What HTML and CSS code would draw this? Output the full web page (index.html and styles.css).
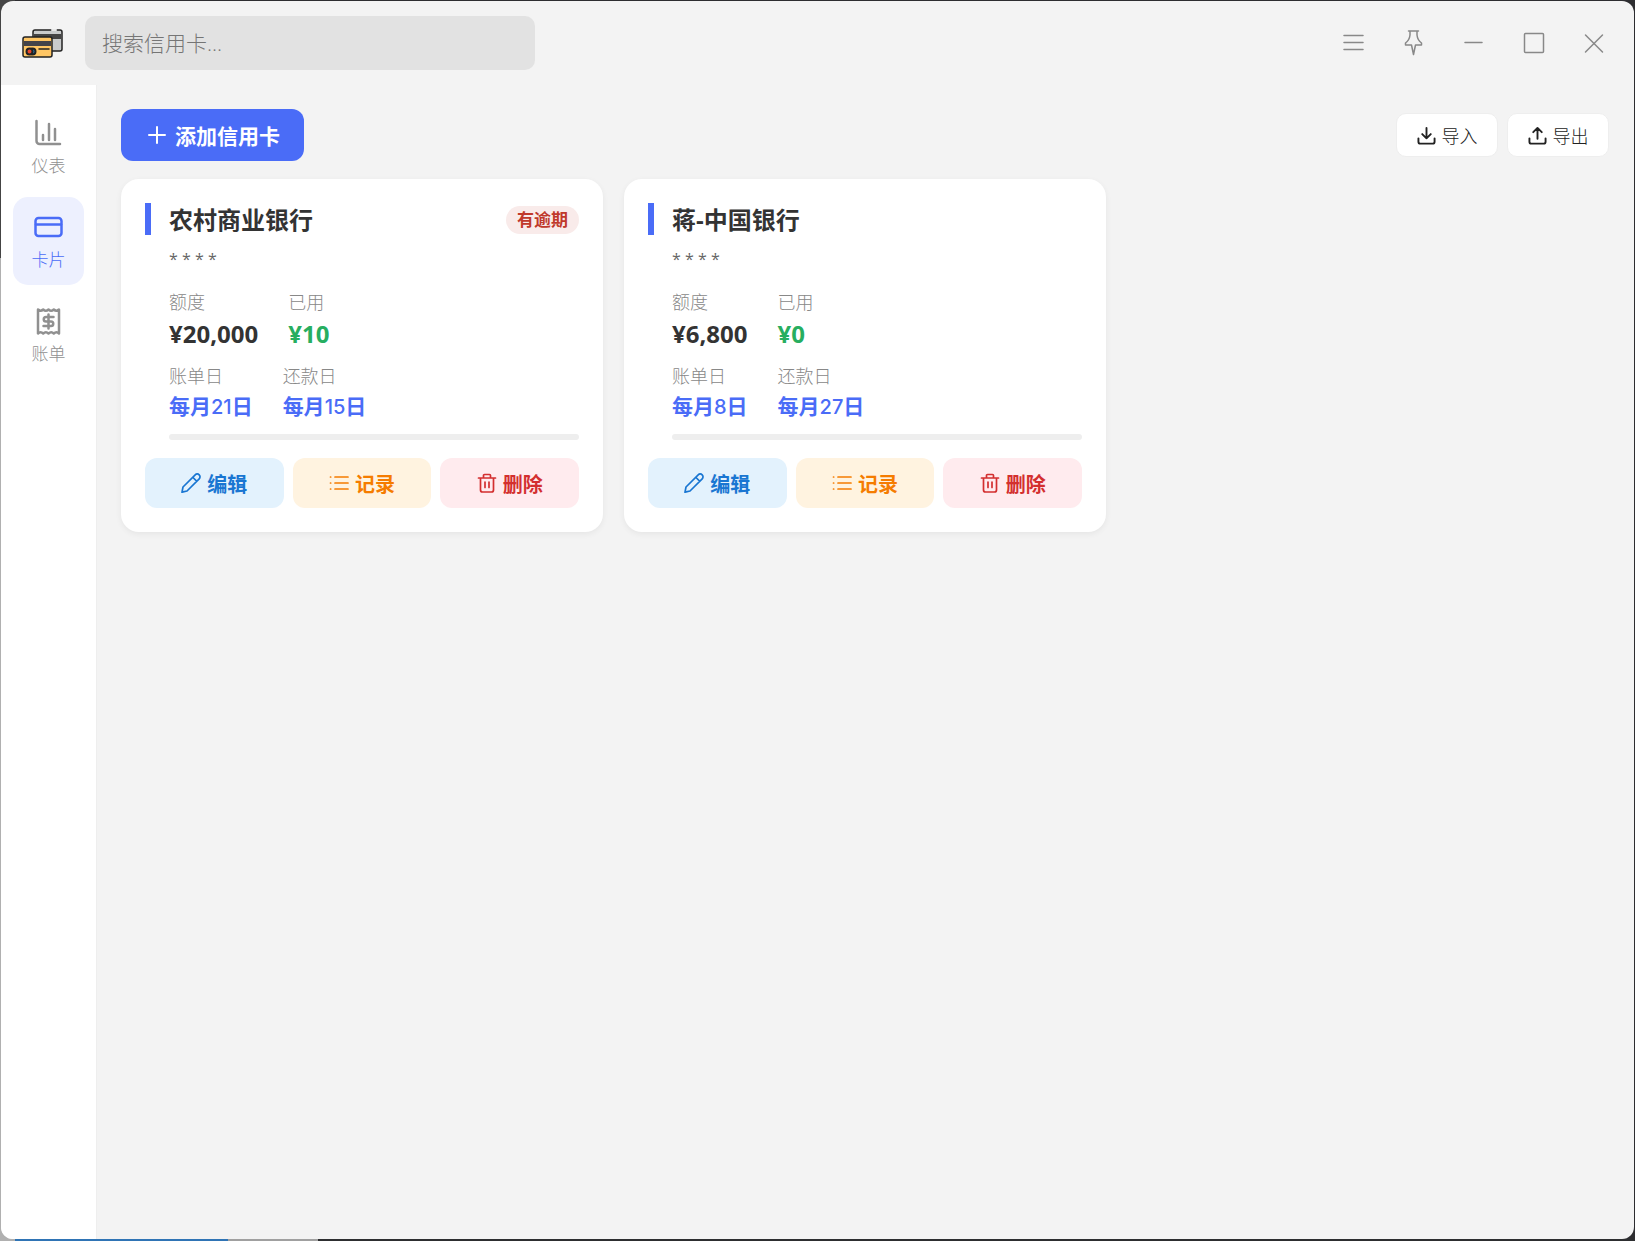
FILE: index.html
```html
<!DOCTYPE html>
<html lang="zh-CN">
<head>
    <meta charset="UTF-8">
    <meta name="viewport" content="width=device-width, initial-scale=1.0">
    <title>信用卡管理</title>
    <link rel="stylesheet" href="styles.css">
</head>
<body>
    <!-- 图标 -->
    <svg class="sprite" aria-hidden="true">
        <symbol id="i-edit" viewBox="0 0 20 20">
            <path d="M1 19.200l1-5.200L14.200 1.800a2.700 2.700 0 0 1 4 4L6 18zM12 4.500l3.600 3.600"/>
        </symbol>
        <symbol id="i-list" viewBox="0 0 20 20">
            <path d="M6 4h13M6 10h13M6 16h13M1.500 4h.2M1.500 10h.2M1.500 16h.2"/>
        </symbol>
        <symbol id="i-trash" viewBox="0 0 20 20">
            <path d="M1.500 5h17M6.500 5V2.500a1 1 0 0 1 1-1h5a1 1 0 0 1 1 1V5M3.500 5v12a2 2 0 0 0 2 2h9a2 2 0 0 0 2-2V5M8 9v5.500M12 9v5.500"/>
        </symbol>
    </svg>

    <div class="window">
        <header class="titlebar">
            <svg class="logo" viewBox="0 0 42 32">
                <rect x="11" y="3" width="29" height="21" rx="2" fill="#c9cbcc" stroke="#222" stroke-width="1.500"/>
                <path d="M12 7h27v5H12z" fill="#444"/>
                <path d="M30 3h4" stroke="#e8e8e8" stroke-width="2"/>
                <rect x="1" y="10" width="29" height="20" rx="2" fill="#ffc664" stroke="#222" stroke-width="1.500"/>
                <path d="M2 14h27v5H2z" fill="#434349"/>
                <circle cx="10.500" cy="24.500" r="3" fill="#2c7fb5" stroke="#222"/>
                <circle cx="7.500" cy="24.500" r="3" fill="#e8452c" stroke="#222"/>
                <path d="M17 22h10" stroke="#222" stroke-width="1.500"/>
            </svg>
            <input type="text" class="search" placeholder="搜索信用卡..." aria-label="搜索信用卡">
            <div class="controls">
                <button aria-label="菜单"><svg viewBox="0 0 24 24"><path d="M2 4.500h19M2 11.500h19M2 18.500h19"/></svg></button>
                <button aria-label="置顶"><svg viewBox="0 0 24 24"><path d="M6.500 0h10M8 0v4Q7.500 9 3.500 12v2H9.500l2 9.500 2-9.500h6v-2Q15.500 9 15 4V0"/></svg></button>
                <button aria-label="最小化"><svg viewBox="0 0 24 24"><path d="M3 11.500h17"/></svg></button>
                <button aria-label="最大化"><svg viewBox="0 0 24 24"><rect x="2.500" y="2.500" width="19" height="19" rx="1"/></svg></button>
                <button aria-label="关闭"><svg viewBox="0 0 24 24"><path d="M3.500 4l17 17M20.500 4l-17 17"/></svg></button>
            </div>
        </header>

        <div class="layout">
            <nav class="sidebar">
                <a href="#" class="nav-item">
                    <svg viewBox="0 0 30 30"><path d="M2.500 3v20a3 3 0 0 0 3 3H26M9 17v5M15 6v16M21 11v11"/></svg>
                    <span>仪表</span>
                </a>
                <a href="#" class="nav-item active">
                    <svg viewBox="0 0 30 30"><rect x="1.500" y="6" width="26" height="18" rx="3"/><path d="M2 12.500h25"/></svg>
                    <span>卡片</span>
                </a>
                <a href="#" class="nav-item">
                    <svg viewBox="0 0 30 30"><path d="M4 3.500q2.600 2.500 5.200 0q2.600 2.500 5.300 0q2.600 2.500 5.300 0q2.600 2.500 5.200 0v24q-2.600-2.500-5.200 0q-2.600-2.500-5.300 0q-2.600-2.500-5.300 0q-2.600-2.500-5.200 0z"/><path d="M19.500 11H12a2.200 2.200 0 0 0 0 4.500h5a2.200 2.200 0 0 1 0 4.500H9.500M14.500 8.500v14"/></svg>
                    <span>账单</span>
                </a>
            </nav>

            <main class="content">
                <div class="toolbar">
                    <button class="btn-add">
                        <svg viewBox="0 0 20 20"><path d="M10 2v16M2 10h16"/></svg>
                        添加信用卡
                    </button>
                    <div class="tools">
                        <button class="btn-tool">
                            <svg viewBox="0 0 20 20"><path d="M1.500 13v3.500a2 2 0 0 0 2 2h13a2 2 0 0 0 2-2V13M10 2v11M5.500 8.500L10 13l4.500-4.500"/></svg>
                            导入
                        </button>
                        <button class="btn-tool">
                            <svg viewBox="0 0 20 20"><path d="M1.500 13v3.500a2 2 0 0 0 2 2h13a2 2 0 0 0 2-2V13M10 13.500V2M5.500 6.500L10 2l4.500 4.500"/></svg>
                            导出
                        </button>
                    </div>
                </div>

                <div class="cards">
                    <section class="card">
                        <div class="card-head">
                            <h2>农村商业银行</h2>
                            <span class="badge">有逾期</span>
                        </div>
                        <div class="card-body">
                            <p class="card-no">* * * *</p>
                            <dl class="row">
                                <div><dt>额度</dt><dd class="money">¥20,000</dd></div>
                                <div><dt>已用</dt><dd class="money used">¥10</dd></div>
                            </dl>
                            <dl class="row">
                                <div><dt>账单日</dt><dd class="day">每月<span>21</span>日</dd></div>
                                <div><dt>还款日</dt><dd class="day">每月<span>15</span>日</dd></div>
                            </dl>
                            <div class="progress"></div>
                        </div>
                        <div class="actions">
                            <button class="edit"><svg><use href="#i-edit"/></svg>编辑</button>
                            <button class="record"><svg><use href="#i-list"/></svg>记录</button>
                            <button class="delete"><svg><use href="#i-trash"/></svg>删除</button>
                        </div>
                    </section>

                    <section class="card">
                        <div class="card-head">
                            <h2>蒋-中国银行</h2>
                        </div>
                        <div class="card-body">
                            <p class="card-no">* * * *</p>
                            <dl class="row">
                                <div><dt>额度</dt><dd class="money">¥6,800</dd></div>
                                <div><dt>已用</dt><dd class="money used">¥0</dd></div>
                            </dl>
                            <dl class="row">
                                <div><dt>账单日</dt><dd class="day">每月<span>8</span>日</dd></div>
                                <div><dt>还款日</dt><dd class="day">每月<span>27</span>日</dd></div>
                            </dl>
                            <div class="progress"></div>
                        </div>
                        <div class="actions">
                            <button class="edit"><svg><use href="#i-edit"/></svg>编辑</button>
                            <button class="record"><svg><use href="#i-list"/></svg>记录</button>
                            <button class="delete"><svg><use href="#i-trash"/></svg>删除</button>
                        </div>
                    </section>
                </div>
            </main>
        </div>
    </div>
</body>
</html>
```
FILE: styles.css
```css
* {
    box-sizing: border-box;
}
body, h2, p, dl, dd {
    margin: 0;
}
body {
    min-height: 100vh;
    display: flex;
    padding: 1px 1px 2px;
    font-family: "Open Sans", "Noto Sans CJK SC", sans-serif;
    color: #333;
    /* 窗口后面的桌面 */
    background:
        linear-gradient(#444 258px, #b0b0b0 258px) 0 0 / 15px 100% no-repeat,
        linear-gradient(90deg, #2f74b5 228px, #a0a0a0 228px, #a0a0a0 318px, #2d2e30 318px) 0 100% / 100% 2px no-repeat,
        #2d2d30;
}
svg {
    fill: none;
    stroke: currentColor;
    stroke-width: 2;
    stroke-linecap: round;
    stroke-linejoin: round;
    flex: none;
    overflow: visible;
}
button, input {
    font-family: inherit;
}
button {
    border: none;
    background: none;
    cursor: pointer;
}
.sprite {
    display: none;
}
.window {
    flex: 1;
    display: flex;
    flex-direction: column;
    background-color: #f3f3f3;
    border-radius: 12px;
    overflow: hidden;
}

/* 标题栏 */
.titlebar {
    display: flex;
    align-items: center;
    height: 84px;
    padding: 0 10px 0 21px;
}
.logo {
    width: 42px;
    height: 32px;
    margin-right: 21px;
    stroke: none;
}
.search {
    width: 450px;
    height: 54px;
    padding: 0 17px;
    border: none;
    border-radius: 10px;
    background-color: #e2e2e2;
    font-size: 21px;
    font-weight: 300;
}
.search::placeholder {
    color: #757575;
}
.controls {
    display: flex;
    margin-left: auto;
}
.controls button {
    display: flex;
    align-items: center;
    justify-content: center;
    width: 60px;
    height: 60px;
    padding: 0;
    color: #888;
}
.controls svg {
    width: 24px;
    height: 24px;
    stroke-width: 1.5;
}

/* 侧边栏 */
.layout {
    flex: 1;
    display: flex;
}
.sidebar {
    display: flex;
    flex-direction: column;
    gap: 6px;
    width: 96px;
    padding: 18px 12px;
    background-color: #fff;
    border-right: 1px solid #eee;
}
.nav-item {
    display: flex;
    flex-direction: column;
    align-items: center;
    gap: 6px;
    height: 88px;
    padding-top: 15px;
    border-radius: 15px;
    color: #909090;
    font-size: 17px;
    font-weight: 300;
    line-height: 24px;
    text-decoration: none;
}
.nav-item svg {
    width: 30px;
    height: 30px;
    stroke-width: 2.5;
}
.nav-item.active {
    background-color: #edf0fe;
    color: #4a6cf7;
}

/* 内容 */
.content {
    flex: 1;
    padding: 24px 25px 24px 24px;
}
.toolbar {
    display: flex;
    align-items: center;
    justify-content: space-between;
    margin-bottom: 18px;
}
.btn-add {
    display: flex;
    align-items: center;
    gap: 8px;
    height: 52px;
    padding: 0 24px 0 26px;
    border-radius: 12px;
    background-color: #4a6cf7;
    color: #fff;
    font-size: 21px;
    font-weight: 700;
}
.btn-add svg {
    width: 20px;
    height: 20px;
}
.tools {
    display: flex;
    gap: 9px;
}
.btn-tool {
    display: flex;
    align-items: center;
    justify-content: center;
    gap: 6px;
    width: 102px;
    height: 44px;
    padding: 0;
    border: 1px solid #eee;
    border-radius: 10px;
    background-color: #fff;
    color: #222;
    font-size: 18px;
    font-weight: 300;
}
.btn-tool svg {
    width: 19px;
    height: 19px;
}

.cards {
    display: grid;
    grid-template-columns: repeat(auto-fill, minmax(420px, 1fr));
    gap: 21px;
}
.card {
    padding: 24px;
    border-radius: 18px;
    background-color: #fff;
    box-shadow: 0 2px 6px rgba(0, 0, 0, 0.06);
}
.card-head {
    display: flex;
    align-items: center;
    justify-content: space-between;
    height: 32px;
    padding: 2px 0 0 18px;
    border-left: 6px solid #4a6cf7;
}
.card-head h2 {
    font-size: 24px;
    font-weight: 700;
    line-height: 32px;
}
.badge {
    padding: 0 11px;
    border-radius: 14px;
    background-color: #f9ebea;
    color: #c0392b;
    font-size: 17px;
    font-weight: 700;
    line-height: 28px;
}
.card-body {
    padding-left: 24px;
}
.card-no {
    margin: 9px 0 13px;
    font-size: 16px;
    line-height: 30px;
    color: #666;
}
.row {
    display: flex;
    gap: 30px;
}
.row + .row {
    margin-top: 10px;
}
.row dt {
    font-size: 18px;
    font-weight: 300;
    line-height: 30px;
    color: #888;
}
.money {
    font-size: 24px;
    font-weight: 700;
    line-height: 34px;
}
.used {
    color: #27ae60;
}
.day {
    height: 30px;
    font-size: 21px;
    font-weight: 700;
    line-height: 30px;
    color: #4a6cf7;
}
.day span {
    font-family: Inter, sans-serif;
    font-size: 20px;
    font-weight: 500;
}
.progress {
    height: 6px;
    margin-top: 13px;
    border-radius: 3px;
    background-color: #eee;
}
.actions {
    display: flex;
    gap: 9px;
    margin-top: 18px;
}
.actions button {
    flex: 1;
    display: flex;
    align-items: center;
    justify-content: center;
    gap: 6px;
    height: 50px;
    padding: 0;
    border-radius: 12px;
    font-size: 20px;
    font-weight: 700;
}
.actions svg {
    width: 20px;
    height: 20px;
    stroke-width: 1.7;
}
.actions .edit {
    background-color: #e3f2fd;
    color: #1976d2;
}
.actions .record {
    background-color: #fff3e0;
    color: #f57c00;
}
.actions .delete {
    background-color: #ffebee;
    color: #d32f2f;
}
```
